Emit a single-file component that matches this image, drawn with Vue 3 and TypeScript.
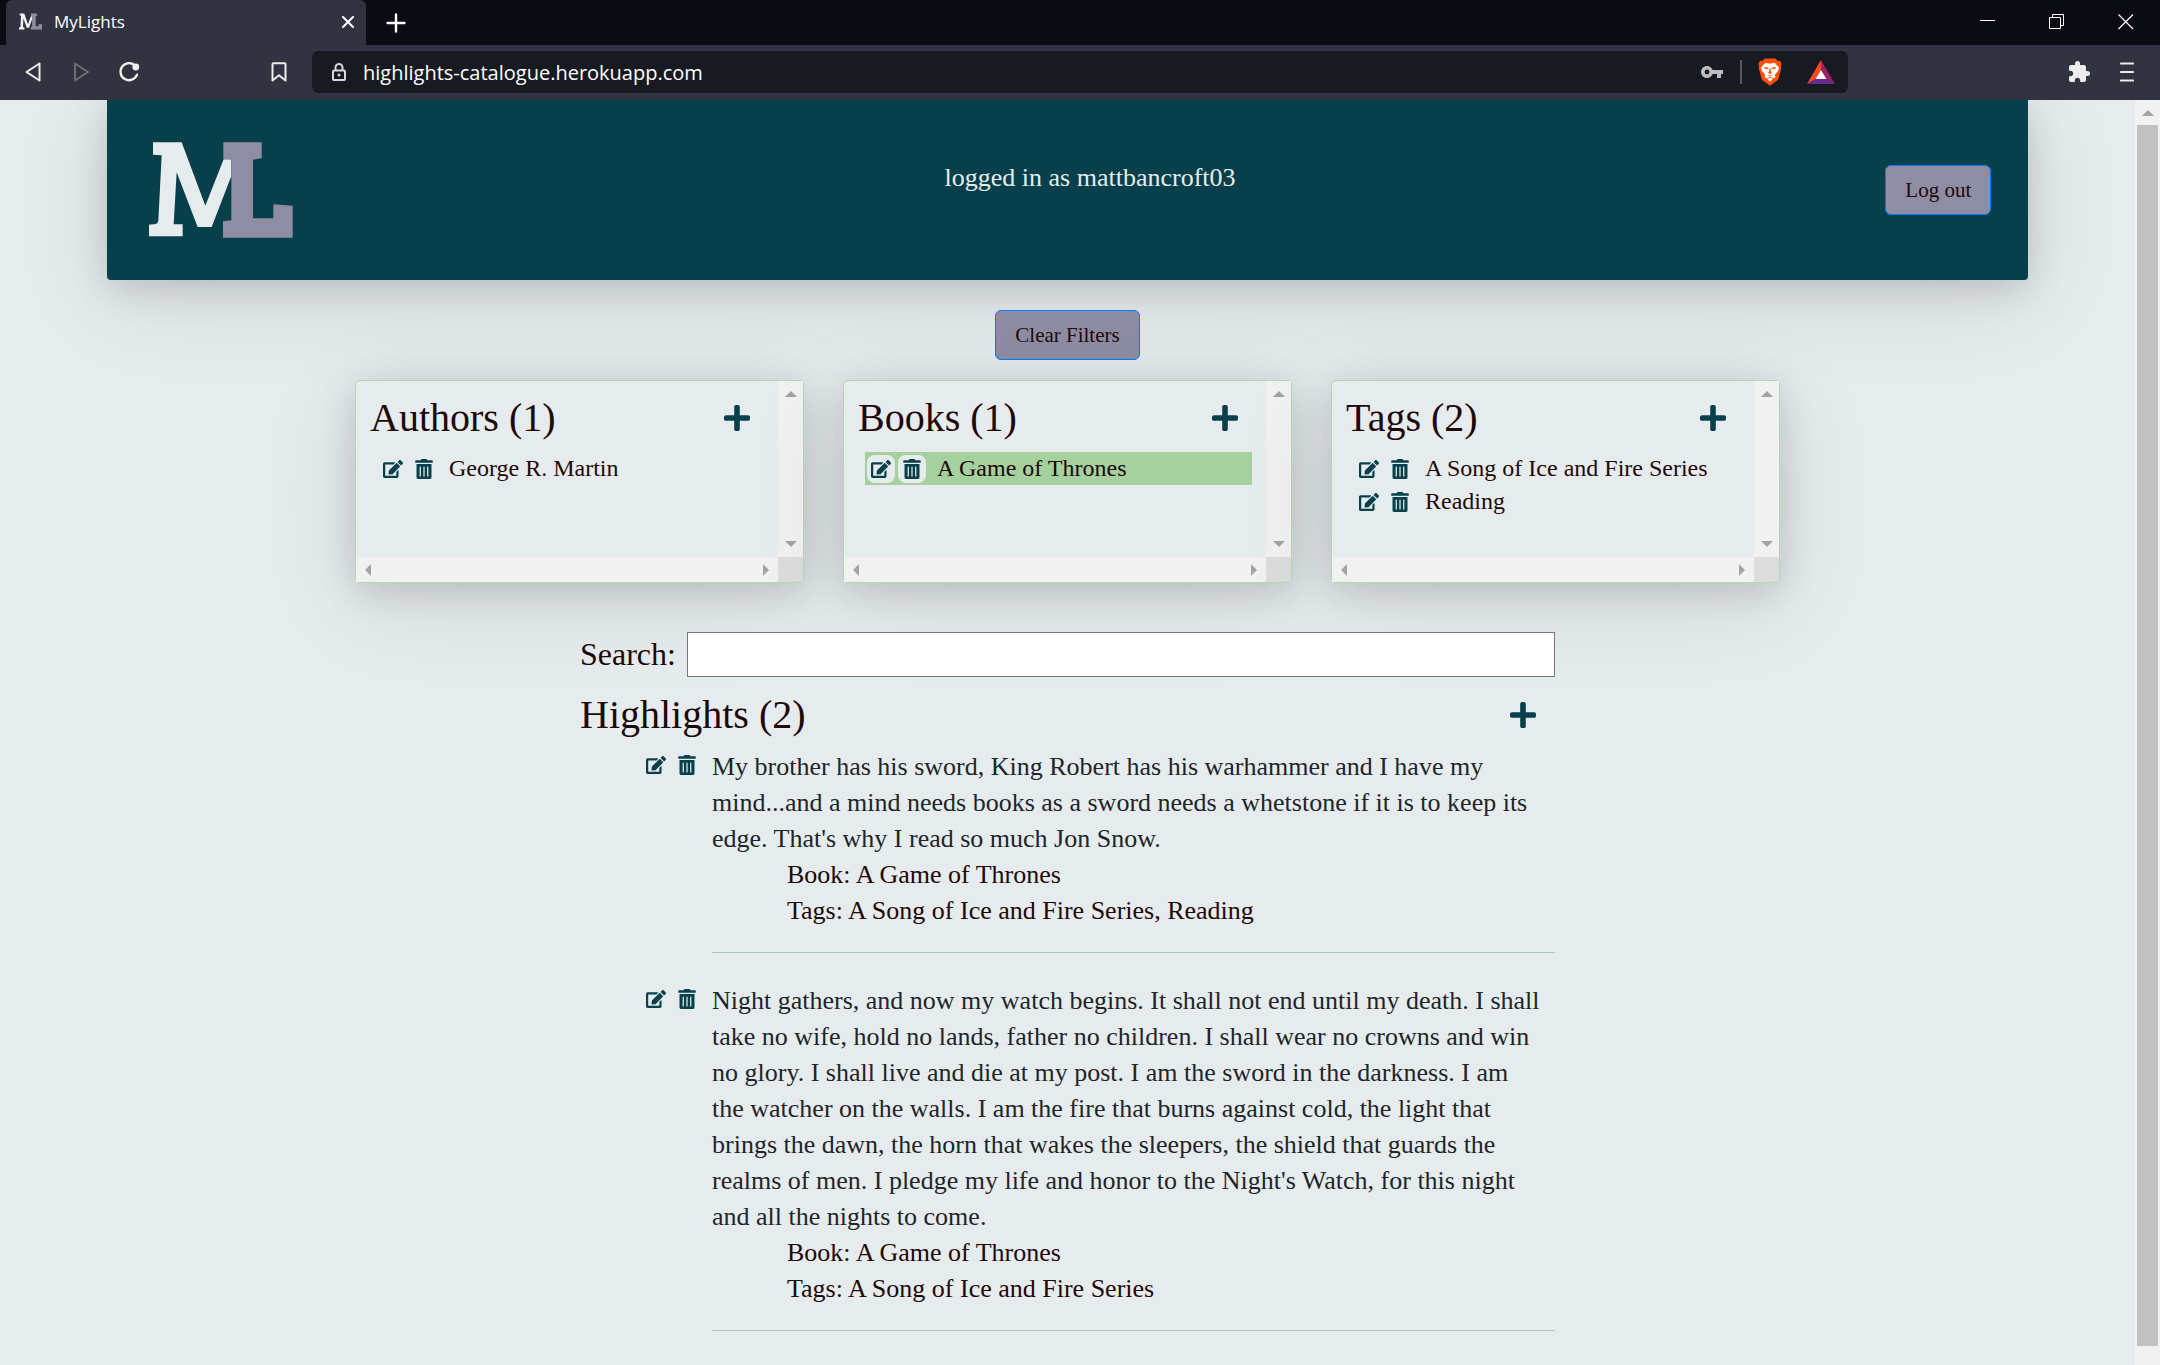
<script setup lang="ts">
import { ref } from 'vue'

interface Entry {
  name: string
  active?: boolean
}

interface Panel {
  title: string
  entries: Entry[]
}

interface Highlight {
  text: string
  book: string
  tags: string[]
}

const address = ref('highlights-catalogue.herokuapp.com')
const search = ref('')

const panels: Panel[] = [
  { title: 'Authors', entries: [{ name: 'George R. Martin' }] },
  { title: 'Books', entries: [{ name: 'A Game of Thrones', active: true }] },
  { title: 'Tags', entries: [{ name: 'A Song of Ice and Fire Series' }, { name: 'Reading' }] },
]

const highlights: Highlight[] = [
  {
    text: "My brother has his sword, King Robert has his warhammer and I have my mind...and a mind needs books as a sword needs a whetstone if it is to keep its edge. That's why I read so much Jon Snow.",
    book: 'A Game of Thrones',
    tags: ['A Song of Ice and Fire Series', 'Reading'],
  },
  {
    text: "Night gathers, and now my watch begins. It shall not end until my death. I shall take no wife, hold no lands, father no children. I shall wear no crowns and win no glory. I shall live and die at my post. I am the sword in the darkness. I am the watcher on the walls. I am the fire that burns against cold, the light that brings the dawn, the horn that wakes the sleepers, the shield that guards the realms of men. I pledge my life and honor to the Night's Watch, for this night and all the nights to come.",
    book: 'A Game of Thrones',
    tags: ['A Song of Ice and Fire Series'],
  },
]

const plusPath =
  'M416 208H272V64c0-17.67-14.33-32-32-32h-32c-17.67 0-32 14.33-32 32v144H32c-17.67 0-32 14.33-32 32v32c0 17.67 14.33 32 32 32h144v144c0 17.67 14.33 32 32 32h32c17.67 0 32-14.33 32-32V304h144c17.67 0 32-14.33 32-32v-32c0-17.67-14.33-32-32-32z'
const editPath =
  'M402.6 83.2l90.2 90.2c3.8 3.8 3.8 10 0 13.8L274.4 405.6l-92.8 10.3c-12.4 1.4-22.9-9.1-21.5-21.5l10.3-92.8L388.8 83.2c3.8-3.8 10-3.8 13.8 0zm162-22.9l-48.8-48.8c-15.2-15.2-39.9-15.2-55.2 0l-35.4 35.4c-3.8 3.8-3.8 10 0 13.8l90.2 90.2c3.8 3.8 10 3.8 13.8 0l35.4-35.4c15.2-15.3 15.2-40 0-55.2zM384 346.2V448H64V128h229.8c3.2 0 6.2-1.3 8.5-3.5l40-40c7.6-7.6 2.2-20.5-8.5-20.5H48C21.5 64 0 85.5 0 112v352c0 26.5 21.5 48 48 48h352c26.5 0 48-21.5 48-48V306.2c0-10.7-12.9-16-20.5-8.5l-40 40c-2.2 2.3-3.5 5.3-3.5 8.5z'
const trashPath =
  'M32 464a48 48 0 0 0 48 48h288a48 48 0 0 0 48-48V128H32zm272-256a16 16 0 0 1 32 0v224a16 16 0 0 1-32 0zm-96 0a16 16 0 0 1 32 0v224a16 16 0 0 1-32 0zm-96 0a16 16 0 0 1 32 0v224a16 16 0 0 1-32 0zM432 32H312l-9.4-18.7A24 24 0 0 0 281.1 0H166.8a23.72 23.72 0 0 0-21.4 13.3L136 32H16A16 16 0 0 0 0 48v32a16 16 0 0 0 16 16h416a16 16 0 0 0 16-16V48a16 16 0 0 0-16-16z'
const logoLeft =
  'M190 157H276L347 347L402 208H425V258L366 411H324L261 247L252 403H279V439H178V404L198 402Q205 400 206 392L216 196L190 194Z'
const logoRight =
  'M401 157H516V205L490 209V385H551V343L609 347V443H400V394L425 391V208H401Z'
</script>

<template>
  <div class="window">
    <div class="tabbar">
      <div class="tab">
        <svg class="favicon" viewBox="178 150 431 300" preserveAspectRatio="none" aria-hidden="true">
          <path :d="logoLeft" fill="#f1f4f6" />
          <path :d="logoRight" fill="#8e8da3" />
        </svg>
        <span class="tab-title">MyLights</span>
        <button class="chrome-btn tab-close" type="button" aria-label="Close tab">
          <svg width="12" height="12" viewBox="0 0 12 12"><path d="M1 1L11 11M11 1L1 11" stroke="#fff" stroke-width="2" stroke-linecap="round" /></svg>
        </button>
      </div>
      <button class="chrome-btn tab-new" type="button" aria-label="New tab">
        <svg width="20" height="20" viewBox="0 0 20 20"><path d="M10 1.5V18.5M1.5 10H18.5" stroke="#fff" stroke-width="2.4" stroke-linecap="round" /></svg>
      </button>
      <div class="window-controls">
        <button class="chrome-btn" type="button" aria-label="Minimize">
          <svg width="16" height="16" viewBox="0 0 16 16"><path d="M0 6.5H15" stroke="#fff" /></svg>
        </button>
        <button class="chrome-btn" type="button" aria-label="Restore">
          <svg width="16" height="16" viewBox="0 0 16 16" fill="none" stroke="#fff"><path d="M.5 3.5H11.5V14.5H.5ZM3.5 3.5V.5H14.5V11.5H11.5" /></svg>
        </button>
        <button class="chrome-btn" type="button" aria-label="Close">
          <svg width="16" height="16" viewBox="0 0 16 16"><path d="M.5 .5L15 15M15 .5L.5 15" stroke="#fff" stroke-width="1.2" /></svg>
        </button>
      </div>
    </div>

    <div class="toolbar">
      <button class="chrome-btn nav" type="button" aria-label="Back">
        <svg width="20" height="20" viewBox="0 0 20 20"><path d="M16.5 1.5V18.5L3.5 10Z" fill="none" stroke="#eee" stroke-width="2" stroke-linejoin="round" /></svg>
      </button>
      <button class="chrome-btn nav" type="button" aria-label="Forward">
        <svg width="20" height="20" viewBox="0 0 20 20"><path d="M4 1.5V18.5L17 10Z" fill="none" stroke="#6b6d79" stroke-width="2" stroke-linejoin="round" /></svg>
      </button>
      <button class="chrome-btn nav" type="button" aria-label="Reload">
        <svg width="22" height="22" viewBox="0 0 22 22">
          <path d="M17.5 5.2A8.5 8.5 0 1 0 19 13.6" fill="none" stroke="#f0f0f0" stroke-width="2.3" stroke-linecap="round" />
          <circle cx="17.8" cy="6" r="3.4" fill="#f0f0f0" />
        </svg>
      </button>
      <button class="chrome-btn nav bookmark" type="button" aria-label="Bookmark">
        <svg width="16" height="20" viewBox="0 0 16 20"><path d="M2.500 1.200H13.500Q14.500 1.200 14.500 2.200V18.500L8 13.200L1.500 18.500V2.200Q1.500 1.200 2.500 1.200Z" fill="none" stroke="#eee" stroke-width="2" stroke-linejoin="round" /></svg>
      </button>
      <div class="address">
        <svg class="lock" width="14" height="18" viewBox="0 0 14 18">
          <path d="M3.5 8V4.5a3.5 3.5 0 0 1 7 0V8" fill="none" stroke="#d8d8da" stroke-width="2" />
          <rect x="1" y="7.5" width="12" height="9.5" rx="1" fill="none" stroke="#d8d8da" stroke-width="2" />
          <circle cx="7" cy="12" r="1.5" fill="#d8d8da" />
        </svg>
        <input v-model="address" class="address-input" type="text" aria-label="Address" />
        <button class="chrome-btn key" type="button" aria-label="Passwords">
          <svg width="24" height="24" viewBox="0 0 24 24"><path fill="#bdbdc0" d="M12.65 10C11.83 7.67 9.61 6 7 6c-3.31 0-6 2.69-6 6s2.69 6 6 6c2.61 0 4.83-1.67 5.65-4H17v4h4v-4h2v-4H12.65zM7 14.4a2.4 2.4 0 1 1 0-4.8 2.4 2.4 0 0 1 0 4.8z" /></svg>
        </button>
        <span class="divider"></span>
        <button class="chrome-btn brave" type="button" aria-label="Shields">
          <svg width="24" height="28" viewBox="0 0 24 28">
            <path fill="#fb4f0b" d="M6.5 .5H17.5L19.5 3L22 2.8L23.6 6L23 8L23.3 10L20.5 20.5Q20 22 18.5 23L12 27.7L5.500 23Q4 22 3.500 20.5L.7 10L1 8L.4 6L2 2.800L4.500 3Z" />
            <path fill="#fff" d="M7.500 4.800L12 5.800L16.500 4.800L21 9.500L20 13L16.800 16.800L17.500 19L14.800 20.500L12 18.600L9.200 20.500L6.500 19L7.200 16.800L4 13L3 9.500Z" />
            <path fill="#fb4f0b" d="M6 9L10.500 9.700L10.800 10.500L9 11.200L6.500 10.500ZM18 9L13.500 9.700L13.200 10.500L15 11.200L17.500 10.500ZM11.400 10.500H12.600L13 14L14 14.800L12 16.200L10 14.800L11 14ZM8.800 16.800L12 17.400L15.200 16.800L12 18.600Z" />
            <path fill="#fff" d="M12 19.600L14.600 21.200L12 23.600L9.400 21.200Z" />
          </svg>
        </button>
        <button class="chrome-btn bat" type="button" aria-label="Rewards">
          <svg width="28" height="24" viewBox="0 0 28 24">
            <path fill="#ff4724" d="M14 0V10L8.500 19L0 24Z" />
            <path fill="#9e1f63" d="M14 0V10L19.500 19L28 24Z" />
            <path fill="#662d91" d="M0 24L8.500 19H19.500L28 24Z" />
            <path fill="#fff" d="M14 10L19.500 19H8.500Z" />
          </svg>
        </button>
      </div>
      <button class="chrome-btn nav extensions" type="button" aria-label="Extensions">
        <svg width="24" height="24" viewBox="0 0 24 24"><path fill="#ececec" d="M20.500 11H19V7c0-1.100-.9-2-2-2h-4V3.500a2.500 2.500 0 0 0-5 0V5H4c-1.100 0-2 .9-2 2v3.800h1.500c1.500 0 2.700 1.200 2.700 2.700S5 16.200 3.500 16.200H2V20c0 1.100.9 2 2 2h3.800v-1.500c0-1.500 1.200-2.700 2.700-2.700s2.700 1.200 2.700 2.700V22H17c1.100 0 2-.9 2-2v-4h1.500a2.500 2.500 0 0 0 0-5z" /></svg>
      </button>
      <button class="chrome-btn nav" type="button" aria-label="Menu">
        <svg width="14" height="20" viewBox="0 0 14 20"><path d="M1 1.500H13M1 10H13M1 18.500H13" stroke="#ececec" stroke-width="2.200" stroke-linecap="round" /></svg>
      </button>
    </div>

    <div class="viewport">
      <div class="page">
        <header class="banner">
          <svg class="logo" viewBox="163 150 453 300" role="img" aria-label="MyLights">
            <path :d="logoLeft" fill="#e6ecee" />
            <path :d="logoRight" fill="#8e8da3" />
          </svg>
          <p class="user">logged in as mattbancroft03</p>
          <button class="btn" type="button">Log out</button>
        </header>

        <main>
          <button class="btn clear" type="button">Clear Filters</button>

          <div class="panels">
            <section v-for="panel in panels" :key="panel.title" class="panel">
              <div class="panel-body">
                <div class="heading">
                  <h2>{{ panel.title }} ({{ panel.entries.length }})</h2>
                  <button class="icon-btn add" type="button" :aria-label="`Add to ${panel.title}`">
                    <svg width="26" height="30" viewBox="0 0 448 512"><path :d="plusPath" /></svg>
                  </button>
                </div>
                <ul class="entries">
                  <li v-for="entry in panel.entries" :key="entry.name" class="entry" :class="{ active: entry.active }">
                    <button class="icon-btn" type="button" :aria-label="`Edit ${entry.name}`">
                      <svg width="20" height="18" viewBox="0 0 576 512"><path :d="editPath" /></svg>
                    </button>
                    <button class="icon-btn" type="button" :aria-label="`Delete ${entry.name}`">
                      <svg width="18" height="20" viewBox="0 0 448 512"><path :d="trashPath" /></svg>
                    </button>
                    <span class="entry-name">{{ entry.name }}</span>
                  </li>
                </ul>
              </div>
              <div class="track vertical">
                <svg width="12" height="6" viewBox="0 0 12 6"><path d="M6 0L12 6H0Z" /></svg>
                <svg width="12" height="6" viewBox="0 0 12 6"><path d="M6 6L12 0H0Z" /></svg>
              </div>
              <div class="track horizontal">
                <svg width="6" height="12" viewBox="0 0 6 12"><path d="M0 6L6 12V0Z" /></svg>
                <svg width="6" height="12" viewBox="0 0 6 12"><path d="M6 6L0 12V0Z" /></svg>
              </div>
              <div class="corner"></div>
            </section>
          </div>

          <section class="highlights">
            <div class="search">
              <label for="search">Search:</label>
              <input id="search" v-model="search" type="text" />
            </div>
            <div class="heading">
              <h2>Highlights ({{ highlights.length }})</h2>
              <button class="icon-btn add" type="button" aria-label="Add highlight">
                <svg width="26" height="30" viewBox="0 0 448 512"><path :d="plusPath" /></svg>
              </button>
            </div>
            <article v-for="(item, i) in highlights" :key="i" class="highlight">
              <button class="icon-btn" type="button" aria-label="Edit highlight">
                <svg width="20" height="18" viewBox="0 0 576 512"><path :d="editPath" /></svg>
              </button>
              <button class="icon-btn" type="button" aria-label="Delete highlight">
                <svg width="18" height="20" viewBox="0 0 448 512"><path :d="trashPath" /></svg>
              </button>
              <div class="highlight-body">
                <p class="quote">{{ item.text }}</p>
                <p class="meta">Book: {{ item.book }}</p>
                <p class="meta">Tags: {{ item.tags.join(', ') }}</p>
              </div>
            </article>
          </section>
        </main>
      </div>
      <div class="page-scroll">
        <svg width="12" height="6" viewBox="0 0 12 6"><path d="M6 0L12 6H0Z" /></svg>
        <div class="thumb"></div>
      </div>
    </div>
  </div>
</template>

<style>
html,
body {
  background: #e6ecee;
}
</style>

<style scoped>
* {
  box-sizing: border-box;
}

.window {
  display: flex;
  flex-direction: column;
  min-height: 100vh;
  font-family: 'Liberation Serif', serif;
  color: #1f0808;
}

svg {
  display: block;
  flex: none;
}

button {
  font: inherit;
  cursor: pointer;
}

.chrome-btn {
  display: flex;
  align-items: center;
  justify-content: center;
  padding: 0;
  border: 0;
  background: none;
}

.tabbar {
  display: flex;
  height: 45px;
  padding-left: 6px;
  background: #0b0b14;
}

.tab {
  display: flex;
  align-items: center;
  width: 360px;
  padding: 0 12px 2px 13px;
  border-radius: 6px 6px 0 0;
  background: #313341;
  color: #fff;
  font: 17px 'Open Sans', sans-serif;
}

.favicon {
  width: 23px;
  height: 17px;
}

.tab-title {
  flex: 1;
  margin-left: 12px;
}

.tab-new {
  width: 60px;
}

.window-controls {
  display: flex;
  margin-left: auto;
}

.window-controls .chrome-btn {
  width: 69px;
  padding-bottom: 2px;
}

.toolbar {
  display: flex;
  align-items: center;
  height: 55px;
  padding: 0 9px 1px;
  background: #313341;
}

.nav {
  width: 48px;
  height: 42px;
}

.bookmark {
  margin: 0 9px 0 102px;
}

.address {
  display: flex;
  flex: 1;
  align-items: center;
  min-width: 0;
  height: 42px;
  padding: 0 13px 0 20px;
  border-radius: 6px;
  background: #181a21;
}

.address-input {
  flex: 1;
  min-width: 0;
  margin-left: 17px;
  padding: 0;
  border: 0;
  outline: 0;
  background: none;
  color: #fff;
  font: 20px 'Open Sans', sans-serif;
}

.divider {
  width: 2px;
  height: 24px;
  margin: 0 16px;
  background: #55575f;
}

.bat {
  margin-left: 25px;
}

.extensions {
  margin-left: 207px;
}

.viewport {
  display: flex;
  flex: 1;
}

.page {
  flex: 1;
  min-width: 0;
  overflow: hidden;
  background: #e6ecee;
}

.page-scroll {
  display: flex;
  flex-direction: column;
  align-items: center;
  width: 25px;
  padding: 10px 2px 19px;
  background: #f1f1f1;
}

.page-scroll svg,
.track svg {
  fill: #a3a3a3;
}

.thumb {
  flex: 1;
  align-self: stretch;
  margin-top: 9px;
  background: #c1c1c1;
}

.banner,
.panel {
  box-shadow: 0 8px 36px rgba(0, 0, 0, 0.15), 0 16px 96px rgba(0, 0, 0, 0.1);
}

.banner {
  display: flex;
  align-items: center;
  justify-content: space-between;
  height: 180px;
  margin: 0 5%;
  padding: 0 37px;
  border-radius: 0 0 4px 4px;
  background: #07404b;
}

.logo {
  width: 151px;
  height: 100px;
}

.user {
  margin: 0 0 24px;
  color: #e6ecee;
  font-size: 26px;
  line-height: 36px;
}

.btn {
  height: 50px;
  padding: 0 19px;
  border: 1px solid #007bff;
  border-radius: 6px;
  background: #8e8da3;
  color: #1f0808;
  font-size: 21px;
}

main {
  display: flex;
  flex-direction: column;
  align-items: center;
  padding: 30px 20px;
}

.panels {
  display: grid;
  grid-template-columns: repeat(3, 1fr);
  gap: 39px;
  width: 100%;
  max-width: 1425px;
  margin: 20px 0 49px;
}

.panel {
  display: grid;
  grid-template: 1fr 25px / 1fr 25px;
  height: 203px;
  border: 1px solid #b3d6b0;
  border-radius: 4px;
  background: #e6ecee;
}

.panel-body {
  min-width: 0;
  padding: 13px 14px 0;
}

.heading {
  display: flex;
  align-items: center;
  justify-content: space-between;
  padding-right: 12px;
}

h2 {
  margin: 0;
  font-size: 40px;
  font-weight: 400;
  line-height: 48px;
}

.entries {
  margin: 10px 0 0 7px;
  padding: 0;
  list-style: none;
}

.entry {
  display: flex;
  gap: 3px;
  align-items: center;
  height: 33px;
  padding-left: 2px;
  font-size: 24px;
  line-height: 33px;
  white-space: nowrap;
}

.entry.active {
  background: #a5d19f;
}

.entry-name {
  margin-left: 8px;
}

.icon-btn {
  display: flex;
  flex: none;
  align-items: center;
  justify-content: center;
  width: 28px;
  height: 28px;
  padding: 0;
  border: 0;
  border-radius: 8px;
  background: #e6ecee;
  fill: #07404b;
}

.icon-btn.add {
  width: 30px;
  height: 30px;
  background: none;
}

.track {
  display: flex;
  justify-content: space-between;
  align-items: center;
  padding: 10px;
  background: #f1f1f1;
}

.vertical {
  flex-direction: column;
}

.horizontal {
  padding: 0 9px;
}

.corner {
  background: #dcdcdc;
}

.highlights {
  width: 100%;
  max-width: 975px;
}

.search {
  display: flex;
  align-items: center;
  gap: 11px;
  margin-bottom: 14px;
  font-size: 32px;
}

.search input {
  flex: 1;
  min-width: 0;
  height: 45px;
  padding: 0 8px;
  border: 1px solid #767676;
  border-radius: 0;
  background: #fff;
  font: inherit;
}

.highlights .heading {
  margin-bottom: 10px;
  padding-right: 17px;
}

.highlight {
  display: flex;
  gap: 3px;
  margin-bottom: 30px;
  padding-left: 62px;
}

.highlight:last-child {
  margin-bottom: 0;
}

.highlight .icon-btn {
  margin-top: 2px;
}

.highlight-body {
  flex: 1;
  margin-left: 8px;
  padding-bottom: 23px;
  border-bottom: 1px solid #adc4c4;
  font-size: 26px;
  line-height: 36px;
}

.quote {
  margin: 0;
  padding-right: 12px;
  color: #212529;
}

.meta {
  margin: 0 0 0 75px;
}
</style>
